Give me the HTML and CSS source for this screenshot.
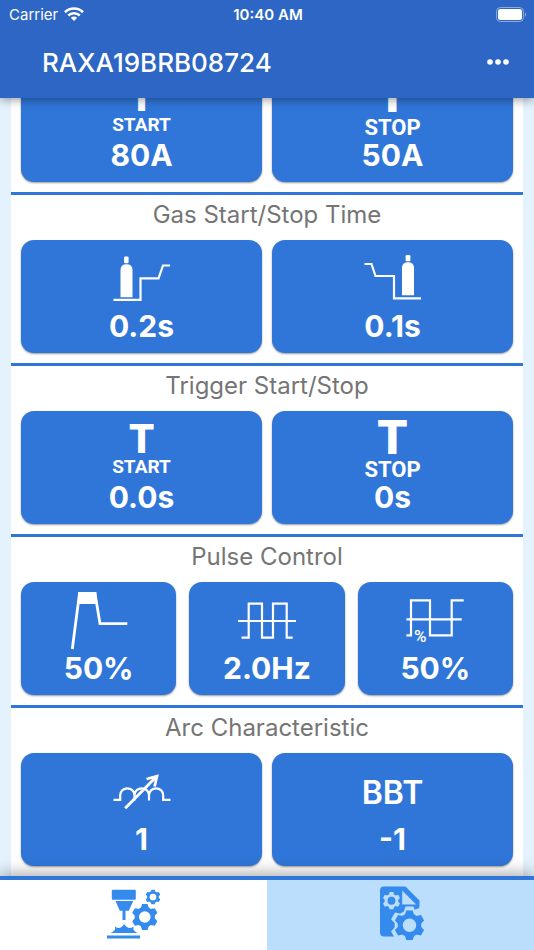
FILE: index.html
```
<!DOCTYPE html>
<html lang="en">
<head>
  <meta charset="UTF-8">
  <meta name="viewport" content="width=device-width, initial-scale=1">
  <title>RAXA19BRB08724</title>
  <link rel="stylesheet" href="styles.css">
</head>
<body>

  <!-- Shared gear shape for the tab icons -->
  <svg class="defs" width="0" height="0" aria-hidden="true">
    <symbol id="gear" viewBox="-13 -13 26 26">
      <circle r="8" fill="none" stroke="currentColor" stroke-width="4.4" />
      <g fill="currentColor">
        <path id="tooth" d="M-4 -9L-2.7 -13H2.7L4 -9Z" />
        <use href="#tooth" transform="rotate(60)" />
        <use href="#tooth" transform="rotate(120)" />
        <use href="#tooth" transform="rotate(180)" />
        <use href="#tooth" transform="rotate(240)" />
        <use href="#tooth" transform="rotate(300)" />
      </g>
    </symbol>
  </svg>

  <header class="header">
    <div class="status-bar">
      <div class="carrier">
        <span>Carrier</span>
        <svg width="20" height="14" viewBox="0 0 20 14" fill="none" stroke="#fff" stroke-width="2.6">
          <path d="M1 5.2C6 .3 14 .3 19 5.2" />
          <path d="M4.2 8.5C7.4 5.4 12.6 5.4 15.8 8.5" />
          <path d="M10 14L6.8 10.8C8.6 9.2 11.4 9.2 13.2 10.8Z" fill="#fff" stroke="none" />
        </svg>
      </div>
      <span class="time">10:40 AM</span>
      <svg class="battery" width="31" height="15" viewBox="0 0 31 15">
        <rect x=".5" y=".5" width="27" height="14" rx="4" fill="none" stroke="#fff" stroke-opacity=".45" />
        <rect x="2" y="2" width="24" height="11" rx="2.5" fill="#fff" />
        <path d="M29 5Q31 7.5 29 10Z" fill="#fff" fill-opacity=".5" />
      </svg>
    </div>
    <div class="app-bar">
      <h1>RAXA19BRB08724</h1>
      <button class="more" type="button" aria-label="More">
        <svg width="22" height="6" viewBox="0 0 22 6" fill="#fff">
          <circle cx="3" cy="3" r="2.8" />
          <circle cx="11" cy="3" r="2.8" />
          <circle cx="19" cy="3" r="2.8" />
        </svg>
      </button>
    </div>
  </header>

  <main class="settings">
    <section class="group">
      <div class="cards">
        <button class="card" type="button">
          <span class="icon start"><b>T</b><span>START</span></span>
          <span class="value">80A</span>
        </button>
        <button class="card" type="button">
          <span class="icon stop"><b>T</b><span>STOP</span></span>
          <span class="value">50A</span>
        </button>
      </div>
    </section>

    <section class="group">
      <h2>Gas Start/Stop Time</h2>
      <div class="cards">
        <button class="card" type="button">
          <svg class="icon" viewBox="0 0 58 58">
            <path class="line" d="M.5 49.8H27.5V28.3H45.5L50 15.5H57" />
            <path class="solid" d="M7.5 47.2V20Q7.5 14.2 13.5 14.2T19.5 20V47.2Z" />
            <rect class="solid" x="11" y="6.5" width="4.6" height="6.7" rx="1.2" />
          </svg>
          <span class="value">0.2s</span>
        </button>
        <button class="card" type="button">
          <svg class="icon" viewBox="0 0 58 58">
            <path class="line" d="M.5 14H7.5L11.5 26H30V48.3H57" />
            <path class="solid" d="M38 45.3V18Q38 12.3 44 12.3T50 18V45.3Z" />
            <rect class="solid" x="41.6" y="5" width="4.8" height="6.3" rx="1.2" />
          </svg>
          <span class="value">0.1s</span>
        </button>
      </div>
    </section>

    <section class="group">
      <h2>Trigger Start/Stop</h2>
      <div class="cards">
        <button class="card" type="button">
          <span class="icon start"><b>T</b><span>START</span></span>
          <span class="value">0.0s</span>
        </button>
        <button class="card" type="button">
          <span class="icon stop"><b>T</b><span>STOP</span></span>
          <span class="value">0s</span>
        </button>
      </div>
    </section>

    <section class="group">
      <h2>Pulse Control</h2>
      <div class="cards three">
        <button class="card" type="button">
          <svg class="icon" viewBox="0 0 58 58">
            <path class="line thick" d="M2.3 57L9.500 1.400H25L30 31.700H57.3" />
            <path class="solid" d="M8.3 0H26.2L27.5 12H8.5Z" />
          </svg>
          <span class="value">50%</span>
        </button>
        <button class="card" type="button">
          <svg class="icon" viewBox="0 0 58 58">
            <path class="line" d="M0 29H58M3.5 45.7H10.7V11.7H24V45.7H35V11.7H48.7V45.7H54.7" />
          </svg>
          <span class="value">2.0Hz</span>
        </button>
        <button class="card" type="button">
          <svg class="icon" viewBox="0 0 58 58">
            <path class="line" d="M.4 27.3H55.7M.4 43.3H5V8.3H24V43.3H45.7V8.3H57.7" />
            <text class="percent" x="8" y="50">%</text>
          </svg>
          <span class="value">50%</span>
        </button>
      </div>
    </section>

    <section class="group">
      <h2>Arc Characteristic</h2>
      <div class="cards">
        <button class="card" type="button">
          <svg class="icon" viewBox="0 0 58 58">
            <path class="line" d="M.5 36.8H7.2V32.5C7.2 23 21.5 23 21.5 32.5V37.5V32.5C21.5 23 36 23 36 32.5V37.5V32.5C36 23 50.2 23 50.2 32.5V36.8H57.5" />
            <path class="line thick" d="M12.2 45.3L43 14M33.5 16L44 13.2L41.6 23.5" />
          </svg>
          <span class="value">1</span>
        </button>
        <button class="card" type="button">
          <span class="icon mode">BBT</span>
          <span class="value">-1</span>
        </button>
      </div>
    </section>
  </main>

  <nav class="tabs">
    <a class="tab" href="#welding" aria-label="Welding">
      <svg width="58" height="58" viewBox="0 0 58 58" fill="currentColor">
        <rect x="6.8" y="3.7" width="24" height="10" rx="1" />
        <path d="M10.5 15H28.2L23.8 24.7H20.5V34H17.5V24.7H14.8Z" />
        <path d="M5.5 47Q11 45 10 40.5Q15 44.5 19.2 38Q23.5 44.5 28.5 40.5Q27.5 45 32.5 47Z" />
        <rect x="2" y="49.5" width="33" height="3" />
        <use href="#gear" x="26.8" y="18" width="26" height="26" />
        <use href="#gear" x="40.5" y="3.5" width="15" height="15" />
      </svg>
    </a>
    <a class="tab active" href="#parameters" aria-label="Parameters">
      <svg width="58" height="58" viewBox="0 0 58 58" fill="currentColor">
        <path d="M12 .5H33.5L47.5 14.5V20Q47.5 23 44 23L32 30L23 50.5H12Q8 50.5 8 46.5V4.5Q8 .5 12 .5Z" />
        <path class="cutout" d="M30.2 4.5V18.5H44.2Z" />
        <g class="cutout">
          <use href="#gear" x="10.7" y="6" width="17.5" height="17.5" />
          <use href="#gear" x="18.5" y="20.3" width="38" height="38" />
          <circle cx="37.5" cy="39.3" r="14" />
        </g>
        <use href="#gear" x="22.5" y="24.3" width="30" height="30" />
      </svg>
    </a>
  </nav>

</body>
</html>
```

FILE: styles.css
```
* {
  box-sizing: border-box;
}
body {
  margin: 0;
  height: 100vh;
  display: flex;
  flex-direction: column;
  background: #e3f2fd;
  font-family: Inter, "Liberation Sans", sans-serif;
  overflow: hidden;
}
h1, h2 {
  margin: 0;
}
button {
  border: none;
  padding: 0;
  font-family: inherit;
  cursor: pointer;
}
.defs {
  position: absolute;
}

/* Header */
.header {
  flex-shrink: 0;
  position: relative;
  z-index: 1;
  background: #2d66c4;
  color: #fff;
  box-shadow: 0 1px 10px rgba(0, 0, 0, 0.45);
}
.status-bar {
  display: grid;
  grid-template-columns: 1fr auto 1fr;
  align-items: center;
  height: 28px;
  padding: 0 7px 0 9px;
  font-size: 15px;
}
.carrier {
  display: flex;
  align-items: center;
  gap: 6px;
}
.time {
  font-weight: 600;
}
.battery {
  justify-self: end;
}
.app-bar {
  display: flex;
  align-items: center;
  justify-content: space-between;
  height: 70px;
  padding: 0 25px 2px 42px;
}
.app-bar h1 {
  font-size: 26px;
  font-weight: 500;
}
.more {
  display: flex;
  background: none;
}

/* Settings list, scrolled to its end */
.settings {
  flex: 1;
  min-height: 0;
  margin: 0 11px;
  display: flex;
  flex-direction: column;
  justify-content: flex-end;
  background: #fff;
}
.group {
  flex-shrink: 0;
  padding: 0 10px 10px;
}
.group + .group {
  border-top: 3px solid #3076d8;
}
.group h2 {
  padding-bottom: 5px;
  color: #757575;
  font-size: 24px;
  font-weight: 400;
  line-height: 40px;
  text-align: center;
}
.cards {
  display: grid;
  grid-template-columns: repeat(2, 1fr);
  gap: 10px;
}
.cards.three {
  grid-template-columns: repeat(3, 1fr);
  gap: 13px;
}
.card {
  display: flex;
  flex-direction: column;
  align-items: center;
  padding: 10px 0 9px;
  border-radius: 13px;
  background: #3076d8;
  color: #fff;
  box-shadow: 0 1px 2px rgba(0, 0, 0, 0.4);
}
.value {
  font-size: 30px;
  font-weight: 700;
  line-height: 36px;
}

/* Card icons */
.icon {
  display: flex;
  flex-direction: column;
  align-items: center;
  justify-content: center;
  height: 58px;
  font-family: Roboto, sans-serif;
  font-weight: 700;
}
svg.icon {
  width: 58px;
  overflow: visible;
}
.start {
  font-size: 19px;
  line-height: 20px;
}
.start b {
  font-size: 40px;
  line-height: 34px;
}
.stop {
  font-size: 22px;
  line-height: 24px;
}
.stop b {
  font-size: 48px;
  line-height: 40px;
}
.mode {
  font-family: inherit;
  font-size: 32px;
  font-weight: 600;
}
.line {
  fill: none;
  stroke: #fff;
  stroke-width: 2.2;
}
.line.thick {
  stroke-width: 2.8;
}
.solid {
  fill: #fff;
}
.percent {
  fill: #fff;
  font-size: 17px;
  font-weight: 500;
}

/* Bottom tabs */
.tabs {
  flex-shrink: 0;
  position: relative;
  z-index: 1;
  display: flex;
  height: 74px;
  border-top: 4px solid #3076d8;
  background: #fff;
  box-shadow: 0 -1px 16px rgba(0, 0, 0, 0.4);
}
.tab {
  flex: 1;
  display: flex;
  align-items: center;
  justify-content: center;
  color: #348aed;
}
.tab.active {
  background: #bbdefd;
}
.cutout {
  color: #bbdefd;
  fill: #bbdefd;
}
```
